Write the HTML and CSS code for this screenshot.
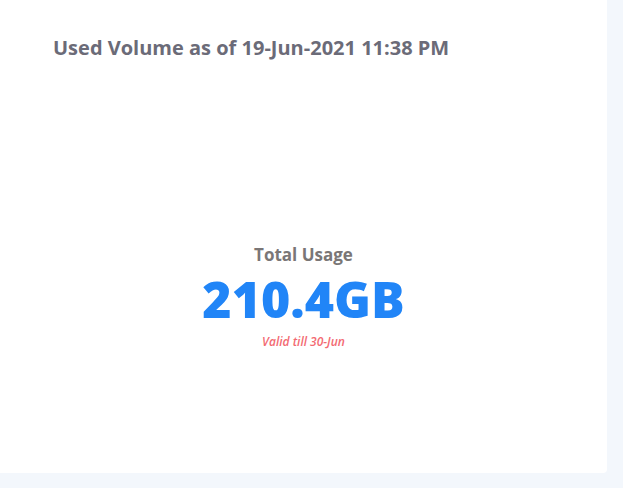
FILE: index.html
```html
<!DOCTYPE html>
<html>
<head>
<meta charset="utf-8">
<link rel="stylesheet" href="styles.css">
</head>
<body>
<div class="card">
  <h2 class="title">Used Volume as of 19-Jun-2021 11:38 PM</h2>
  <div class="usage">
    <div class="label">Total Usage</div>
    <div class="value">210.4GB</div>
    <div class="valid">Valid till 30-Jun</div>
  </div>
</div>
</body>
</html>
```

FILE: styles.css
```css
html, body {
  margin: 0;
  padding: 0;
  background: #f3f7fc;
  font-family: "Open Sans", "Noto Sans", sans-serif;
}
.card {
  width: 607px;
  height: 473px;
  background: #ffffff;
  border-radius: 0 0 4px 0;
  box-sizing: border-box;
  padding: 35px 0 0 53px;
  display: flex;
  flex-direction: column;
}
.title {
  margin: 0;
  font-size: 20px;
  font-weight: 700;
  color: #6b6b78;
  line-height: 26px;
}
.usage {
  margin-left: -53px;
  padding-top: 183px;
  display: flex;
  flex-direction: column;
  align-items: center;
}
.label {
  font-size: 17px;
  font-weight: 700;
  color: #7a7676;
  line-height: 22px;
}
.value {
  font-size: 50px;
  font-weight: 800;
  color: #2185f7;
  line-height: 50px;
  margin-top: 8px;
}
.valid {
  font-size: 12px;
  font-style: italic;
  font-weight: 600;
  color: #f36a72;
  line-height: 16px;
  margin-top: 10px;
}
```
